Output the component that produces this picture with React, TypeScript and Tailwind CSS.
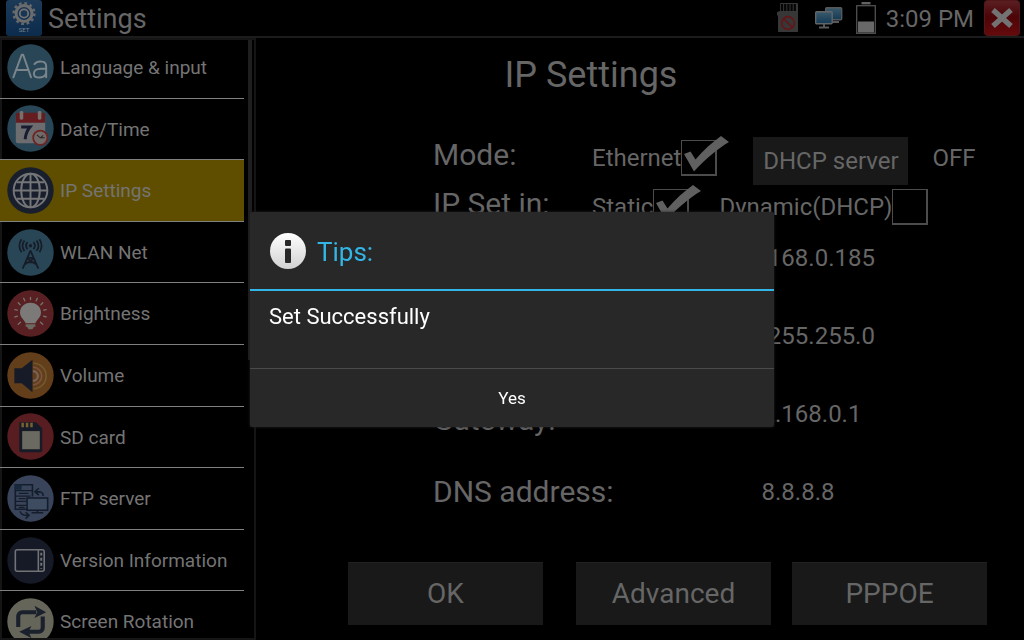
import { useState } from "react";
import type { ReactNode } from "react";

const disc = (fill: string, children: ReactNode) => (
  <svg viewBox="0 0 48 48" className="size-[47px] shrink-0" aria-hidden="true">
    <circle cx="24" cy="24" r="23.7" fill={fill} />
    {children}
  </svg>
);

const LanguageIcon = () =>
  disc(
    "#294656",
    <g fill="none" stroke="#7b868c" strokeWidth="2" strokeLinecap="round" strokeLinejoin="round">
      <path d="M6.5 34 L15 11 L16.5 11 L24.5 34 M9.5 26.5 H22" />
      <path d="M28 20.5 C30 18 33 17.5 36 18 C39.5 18.5 40 21 40 23 V34 M40 25 C34 25 27.5 25 27.5 30 C27.5 33 30 34.3 33 34.3 C36 34.3 39 32.5 40 30" />
    </g>
  );

const DateIcon = () =>
  disc(
    "#294656",
    <>
      <rect x="9" y="10" width="30" height="29" rx="2" fill="#6d6d70" />
      <path d="M9 18 V10 a2 2 0 0 1 2-2 H37 a2 2 0 0 1 2 2 V18 Z" fill="#651d20" />
      <rect x="13" y="6" width="3.6" height="9" rx="1.5" fill="#77716c" />
      <rect x="31.5" y="6" width="3.6" height="9" rx="1.5" fill="#77716c" />
      <path d="M14.5 22.5 H23.5 C20.5 26 19 30 18.5 35" fill="none" stroke="#171c30" strokeWidth="3" />
      <circle cx="34" cy="33.5" r="7.3" fill="#706a69" stroke="#6e2422" strokeWidth="1.8" />
      <path d="M30.5 30.5 L34 33.5 H38.5 M34 33.5 L37 31" fill="none" stroke="#2c2525" strokeWidth="1.1" />
    </>
  );

const GlobeIcon = () =>
  disc(
    "#181e2c",
    <g fill="none" stroke="#747577" strokeWidth="2">
      <circle cx="24" cy="24" r="17.2" />
      <ellipse cx="24" cy="24" rx="9.5" ry="17.2" />
      <path d="M24 7 V41 M7 24 H41 M10 15.5 H38 M10 32.5 H38" />
    </g>
  );

const AntennaIcon = () =>
  disc(
    "#294656",
    <g fill="none" stroke="#161d29" strokeWidth="1.8">
      <path d="M24 22 L16 40.5 M24 22 L32 40.5 M20.8 29.5 H27.2 M19 34 H29 M20.5 30 L29.5 36 M27.5 30 L18.5 36" />
      <circle cx="24" cy="17" r="1.8" fill="#161d29" stroke="none" />
      <path d="M21 13.4 Q18 17 21 20.6 M27 13.4 Q30 17 27 20.6 M17.8 11.8 Q14 17 17.8 22.4 M30.2 11.8 Q34 17 30.2 22.4 M14.8 10.5 Q10.6 17 14.8 23.8 M33.2 10.5 Q37.4 17 33.2 23.8" />
    </g>
  );

const BrightnessIcon = () =>
  disc(
    "#582022",
    <>
      <path d="M24 13 C17.5 13 13.3 17.5 13.3 23 C13.3 28.5 18 30.5 19 34 H29 C30 30.5 34.7 28.5 34.7 23 C34.7 17.5 30.5 13 24 13 Z" fill="#7b7a79" />
      <path d="M19 35 H29 V37.5 H27.5 L26 40 H22 L20.5 37.5 H19 Z" fill="#6c6961" />
      <path
        d="M24 7.5 V9.8 M17 8.5 L18.2 11 M31 8.5 L29.8 11 M11.5 13 L13.4 15 M36.5 13 L34.6 15 M8 20 L10.5 20.6 M40 20 L37.5 20.6 M8 27.5 L10.5 26.8 M40 27.5 L37.5 26.8 M11.5 35 L13.8 33 M36.5 35 L34.2 33"
        stroke="#77716c"
        strokeWidth="1.4"
        strokeLinecap="round"
      />
    </>
  );

const VolumeIcon = () =>
  disc(
    "#633e1a",
    <>
      <path d="M7.5 16.5 H15 L26 8 V41 L15 32 H7.5 Z" fill="#171b28" />
      <g fill="none">
        <path d="M26.5 19.5 A5 5 0 0 1 26.5 29.5" stroke="#77645d" strokeWidth="2.2" />
        <path d="M26.5 15.5 A9 9 0 0 1 26.5 33.5" stroke="#79533d" strokeWidth="1.8" />
        <path d="M27 11.5 A13 13 0 0 1 27 37.5" stroke="#6f5a2f" strokeWidth="1.7" />
      </g>
    </>
  );

const SdIcon = () =>
  disc(
    "#581d20",
    <>
      <path d="M12.5 9.5 H29.5 L36 15.5 V38 a2 2 0 0 1-2 2 H14.5 a2 2 0 0 1-2-2 Z" fill="#171b28" />
      <rect x="15.5" y="18.5" width="18" height="18.5" fill="#6b6a60" />
      <path d="M16 10 V14.5 M20.5 10 V14.5 M25 10 V14.5" stroke="#75612f" strokeWidth="2.6" />
    </>
  );

const FtpIcon = () =>
  disc(
    "#39445a",
    <>
      <g fill="none" stroke="#141d2b" strokeWidth="1.6">
        <path d="M22 35 H8.5 V10 H26 V22" />
        <path d="M8.5 16 H26 M8.5 21.5 H24 M8.5 27 H20 M8.5 31 H20 M12 18.8 H22 M12 24.2 H19 M12 33 H18" strokeWidth="1.2" />
        <rect x="20.5" y="23.5" width="21" height="12.5" fill="#3e4c61" />
        <path d="M31 36 V38.5 M25 38.5 H37" />
        <path d="M37 21.5 C37 17 34 16.8 29 17 M32.5 13.5 L28.5 17 L32.5 20.5 M13.5 37 C14 41 17 41.5 22 41.2 M19 38 L22.5 41.2 L19 44.5" />
      </g>
      <rect x="8" y="9.5" width="7" height="5.5" fill="#16283a" />
    </>
  );

const VersionIcon = () =>
  disc(
    "#161a27",
    <g fill="none" stroke="#727376" strokeWidth="1.6">
      <rect x="8.5" y="13" width="29.5" height="22" rx="2" />
      <path d="M32 13 V35" />
      <path d="M35 16 V32.5" strokeDasharray="3 2.2" strokeWidth="2" />
    </g>
  );

const RotateIcon = () =>
  disc(
    "#66655a",
    <>
      <path d="M11.5 29.5 V18.5 a4 4 0 0 1 4-4 H30" fill="none" stroke="#1a202c" strokeWidth="4.2" />
      <path d="M28 8 L40 14.5 L28 20.5 L31 14.5 Z" fill="#1a202c" />
      <path d="M36.5 19 V30.5 a4 4 0 0 1-4 4 H21" fill="none" stroke="#1a202c" strokeWidth="4.2" />
      <path d="M25 28.5 L12.5 34.5 L25 41 L22 34.5 Z" fill="#1a202c" />
    </>
  );

const menu: { name: string; Icon: () => ReactNode }[] = [
  { name: "Language & input", Icon: LanguageIcon },
  { name: "Date/Time", Icon: DateIcon },
  { name: "IP Settings", Icon: GlobeIcon },
  { name: "WLAN Net", Icon: AntennaIcon },
  { name: "Brightness", Icon: BrightnessIcon },
  { name: "Volume", Icon: VolumeIcon },
  { name: "SD card", Icon: SdIcon },
  { name: "FTP server", Icon: FtpIcon },
  { name: "Version Information", Icon: VersionIcon },
  { name: "Screen Rotation", Icon: RotateIcon },
];

const fields = [
  { id: "ip", label: "IP address:", value: "192.168.0.185" },
  { id: "mask", label: "Subnet mask:", value: "255.255.255.0" },
  { id: "gateway", label: "Gateway:", value: "192.168.0.1" },
  { id: "dns", label: "DNS address:", value: "8.8.8.8" },
];

function SetIcon() {
  return (
    <svg viewBox="0 0 36 36" className="size-9 shrink-0" aria-hidden="true">
      <defs>
        <linearGradient id="set-bg" x1="0" y1="0" x2="0" y2="1">
          <stop offset="0" stopColor="#1d3a57" />
          <stop offset="1" stopColor="#0c2c4e" />
        </linearGradient>
      </defs>
      <rect width="36" height="36" rx="3" fill="url(#set-bg)" />
      <circle cx="18" cy="13.5" r="10.4" fill="none" stroke="#68696b" strokeWidth="2.4" strokeDasharray="2.7 2.75" />
      <circle cx="18" cy="13.5" r="8" fill="none" stroke="#6c6c6d" strokeWidth="3" />
      <circle cx="18" cy="13.5" r="4.2" fill="none" stroke="#727273" strokeWidth="1.8" />
      <text x="18" y="32" textAnchor="middle" fontSize="6" fontFamily="Roboto, sans-serif" fill="#77818c">
        SET
      </text>
    </svg>
  );
}

function StatusIcons() {
  return (
    <>
      <svg viewBox="0 0 22 30" className="h-[30px] w-[22px]" role="img" aria-label="No SD card">
        <path d="M3 1 a1 1 0 0 1 1-1 H20 a1 1 0 0 1 1 1 V29 H1 V13 L0 12 V9 L3 8 Z" fill="#373737" />
        <path d="M5 1 V8 M8.2 1 V8 M11.4 1 V8 M14.6 1 V8 M17.8 1 V8" stroke="#050505" strokeWidth="2.2" />
        <circle cx="11" cy="20" r="6.3" fill="none" stroke="#641519" strokeWidth="1.7" />
        <path d="M6.5 15.5 L15.5 24.5" stroke="#641519" strokeWidth="1.7" />
      </svg>
      <svg viewBox="0 0 28 22" className="ml-4 h-[22px] w-7" role="img" aria-label="Network">
        <defs>
          <linearGradient id="screen" x1="0" y1="0" x2="0" y2="1">
            <stop offset="0" stopColor="#3a5a6d" />
            <stop offset="1" stopColor="#143a55" />
          </linearGradient>
        </defs>
        <rect x="10.7" y="0.7" width="16" height="12" rx="1" fill="url(#screen)" stroke="#56595b" strokeWidth="1.4" />
        <path d="M17 15 H24" stroke="#56595b" strokeWidth="2" />
        <rect x="0.7" y="4.7" width="16.5" height="12" rx="1" fill="url(#screen)" stroke="#626567" strokeWidth="1.4" />
        <path d="M9 17 V20 M4 20.5 H14" stroke="#56595b" strokeWidth="2" />
      </svg>
      <svg viewBox="0 0 20 32" className="ml-[13px] h-8 w-5" role="img" aria-label="Battery 40%">
        <rect x="5.5" y="0" width="9" height="2.4" fill="#626262" />
        <rect x="0.7" y="3.7" width="18.6" height="27.6" fill="none" stroke="#505050" strokeWidth="1.3" />
        <rect x="2" y="19.5" width="16" height="11" fill="#686868" />
      </svg>
    </>
  );
}

function CheckBox({ label, initial, className }: { label: string; initial: boolean; className?: string }) {
  const [on, setOn] = useState(initial);
  return (
    <label className={`flex items-center text-2xl leading-9 ${className ?? ""}`}>
      {label}
      <span className="relative flex">
        <input
          type="checkbox"
          checked={on}
          onChange={() => setOn(!on)}
          className="size-9 appearance-none border border-r-2 border-b-2 border-[#4c4c4c]"
        />
        {on && (
          <svg viewBox="0 0 48 40" className="pointer-events-none absolute -top-1 left-0 h-10 w-12" aria-hidden="true">
            <path d="M3 18 L9.5 15.5 L14.5 23.5 C22 14.5 31 6.5 40 0 L48 6 C36 13 24 23.5 13 35.5 Z" fill="#606060" />
          </svg>
        )}
      </span>
    </label>
  );
}

const bigButton = "h-[63px] w-[195px] border-t border-[#202020] bg-[#191919] text-[28px]";

export default function App() {
  const [open, setOpen] = useState(true);
  return (
    <div className="flex h-screen flex-col overflow-hidden bg-black font-['Roboto','Liberation_Sans',sans-serif] text-[#666666]">
      <header className="flex h-[38px] shrink-0 items-center border-b-2 border-[#1c1c1c] pl-1.5">
        <SetIcon />
        <h1 className="ml-1.5 flex-1 pt-0.5 text-[27px] leading-9">Settings</h1>
        <StatusIcons />
        <time className="ml-2.5 pt-0.5 text-2xl leading-9">3:09 PM</time>
        <button type="button" aria-label="Close" className="mr-1 ml-2.5 flex">
          <svg viewBox="0 0 36 36" className="size-9" aria-hidden="true">
            <defs>
              <linearGradient id="close-bg" x1="0" y1="0" x2="0" y2="1">
                <stop offset="0" stopColor="#5a2024" />
                <stop offset="0.45" stopColor="#4c0508" />
                <stop offset="1" stopColor="#650a0c" />
              </linearGradient>
            </defs>
            <rect x="0.5" y="0.5" width="35" height="35" rx="3" fill="url(#close-bg)" stroke="#53171a" />
            <path d="M9 10 L27 26 M27 10 L9 26" stroke="#737373" strokeWidth="5.4" />
          </svg>
        </button>
      </header>

      <div className="flex min-h-0 flex-1">
        <nav className="flex w-64 shrink-0 items-start overflow-hidden border-t-2 border-r-2 border-b-2 border-[#151515]">
          <ul className="-mt-[3px] grid h-[616px] w-[244px] shrink-0 auto-rows-fr">
            {menu.map(({ name, Icon }) => {
              const current = name === "IP Settings";
              return (
                <li key={name} className={`border-b border-[#808080] ${current ? "bg-[#5f4e00]" : ""}`}>
                  <a
                    href="#"
                    aria-current={current ? "page" : undefined}
                    className={`flex h-full items-center gap-1.5 border-l-2 pl-[5px] text-[19px] text-[#747474] ${
                      current ? "border-transparent" : "border-[#151515]"
                    }`}
                  >
                    <Icon />
                    <span className="pt-0.5">{name}</span>
                  </a>
                </li>
              );
            })}
          </ul>
          <div className="ml-1 h-80 w-1 bg-[#1e1e1e]" />
        </nav>

        <main className="min-w-0 flex-1">
          <form className="pl-[92px]" onSubmit={(e) => e.preventDefault()}>
            <h2 className="mt-[17px] pr-[190px] text-center text-4xl leading-10">IP Settings</h2>
            <div className="mt-9 pl-[85px]">
              <div className="flex h-[53px] items-center">
                <span className="w-[159px] pb-1.5 text-3xl">Mode:</span>
                <CheckBox label="Ethernet" initial />
                <button type="button" className="mt-1.5 ml-9 h-12 w-[155px] bg-[#191919] text-2xl">
                  DHCP server
                </button>
                <output className="ml-6 text-2xl">OFF</output>
              </div>
              <div className="flex h-[45px] items-center">
                <span className="w-[159px] pb-1.5 text-3xl">IP Set in:</span>
                <CheckBox label="Static" initial />
                <CheckBox label="Dynamic(DHCP)" initial={false} className="ml-[30px]" />
              </div>
              <div className="-mt-2.5 flex items-end">
                <div className="flex w-[210px] flex-col pb-[3px]">
                  {fields.map((f) => (
                    <label key={f.id} htmlFor={f.id} className="flex h-[72px] items-center text-3xl">
                      {f.label}
                    </label>
                  ))}
                </div>
                <div className="flex w-[310px] flex-col">
                  {fields.map((f) => (
                    <input
                      key={f.id}
                      id={f.id}
                      defaultValue={f.value}
                      className="h-[78px] bg-transparent text-center text-2xl outline-none"
                    />
                  ))}
                </div>
              </div>
            </div>
            <div className="mt-[31px] flex">
              <button type="submit" className={bigButton}>OK</button>
              <button type="button" className={`ml-[33px] ${bigButton}`}>Advanced</button>
              <button type="button" className={`ml-[21px] ${bigButton}`}>PPPOE</button>
            </div>
          </form>
        </main>
      </div>

      {open && (
        <div className="fixed inset-0 flex items-center justify-center pb-px">
          <section
            role="dialog"
            aria-modal="true"
            aria-labelledby="tips"
            className="w-[524px] rounded-xs bg-[#282828] text-white shadow-[0_0_3px_#222222]"
          >
            <div className="flex h-[77px] items-center gap-[11px] pl-5">
              <svg viewBox="0 0 36 36" className="size-9" aria-hidden="true">
                <defs>
                  <linearGradient id="info" x1="0" y1="0" x2="0" y2="1">
                    <stop offset="0" stopColor="#ffffff" />
                    <stop offset="1" stopColor="#d2d2d2" />
                  </linearGradient>
                </defs>
                <circle cx="18" cy="18" r="18" fill="url(#info)" />
                <rect x="15" y="7" width="6" height="6" rx="1" fill="#282828" />
                <rect x="15" y="15.5" width="6" height="14.5" rx="1" fill="#282828" />
              </svg>
              <h3 id="tips" className="pt-0.5 text-[26px] leading-9 text-[#33b5e5]">Tips:</h3>
            </div>
            <p className="h-[79px] border-t-2 border-[#33b5e5] px-[19px] pt-2.5 text-[22px] leading-8">Set Successfully</p>
            <button type="button" onClick={() => setOpen(false)} className="h-[59px] w-full border-t border-[#4a4a4a] pt-0.5 text-[17px]">
              Yes
            </button>
          </section>
        </div>
      )}
    </div>
  );
}
